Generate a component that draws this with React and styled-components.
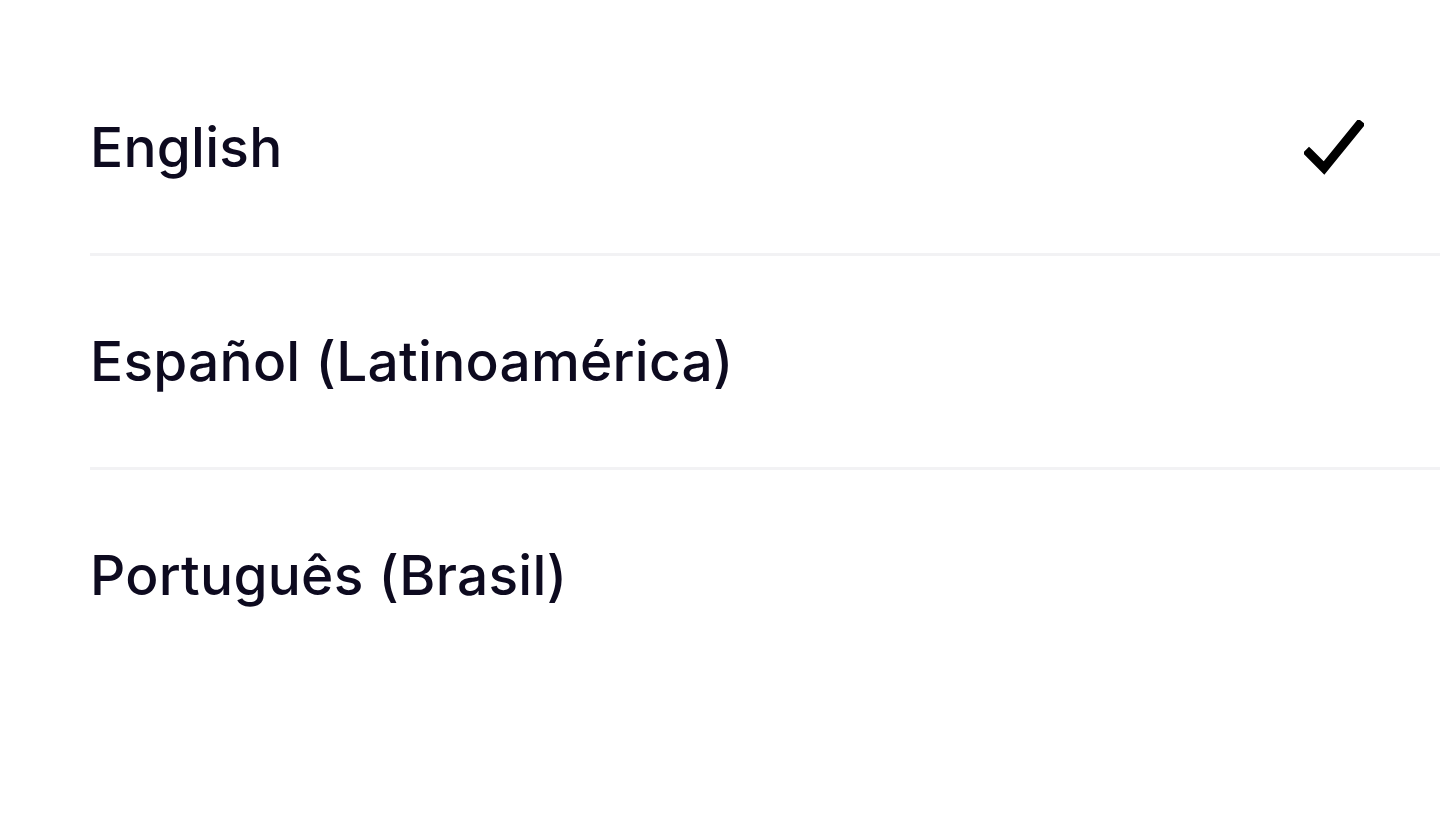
import React from "react"
import styled, { createGlobalStyle } from "styled-components"

const GlobalStyle = createGlobalStyle`
  html, body {
    margin: 0;
    padding: 0;
    background: #ffffff;
  }
  body {
    font-family: 'Inter', 'Noto Sans', sans-serif;
    color: #0d0a1f;
  }
`

const List = styled.ul`
  list-style: none;
  margin: 0;
  padding: 42px 0 0 90px;
`

const Row = styled.li`
  display: flex;
  align-items: center;
  justify-content: space-between;
  height: 211px;
  padding-right: 76px;
  border-bottom: ${({ $last }) => ($last ? "none" : "3px solid #f2f2f4")};
`

const Label = styled.span`
  font-size: 55px;
  font-weight: 500;
  letter-spacing: 0.25px;
  line-height: 1;
`

const Check = () => (
  <svg width="60" height="56" viewBox="0 0 60 56" fill="none">
    <path
      d="M5 33 L20 48 L55 5"
      stroke="#000"
      strokeWidth="9"
      strokeLinecap="square"
      strokeLinejoin="miter"
    />
  </svg>
)

const languages = [
  { name: "English", selected: true },
  { name: "Español (Latinoamérica)" },
  { name: "Português (Brasil)" },
]

export default function App() {
  return (
    <>
      <GlobalStyle />
      <List>
        {languages.map((l, i) => (
          <Row key={l.name} $last={i === languages.length - 1}>
            <Label>{l.name}</Label>
            {l.selected && <Check />}
          </Row>
        ))}
      </List>
    </>
  )
}
